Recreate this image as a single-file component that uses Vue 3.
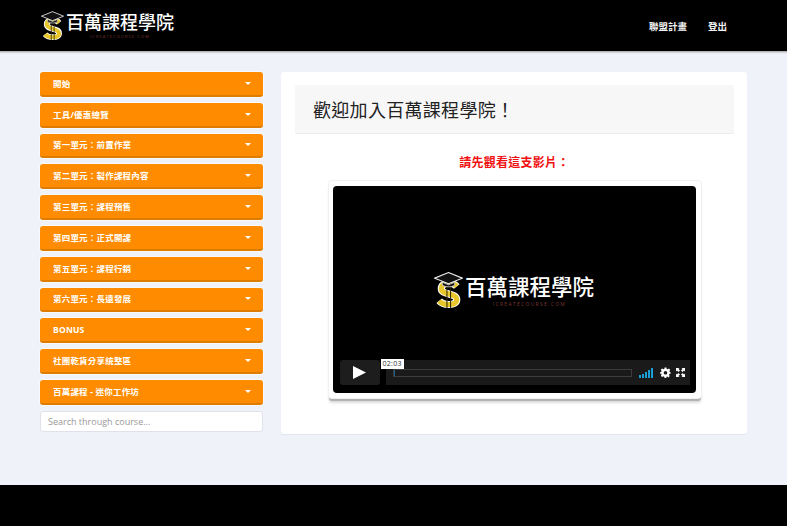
<template>
  <div class="page">
    <header class="topbar">
      <div class="brand">
        <svg class="logo-mark" viewBox="0 0 28 36">
          <path d="M22 14 C18 9 7 10 7 16 C7 23 22 20 22 27 C22 33 9 33 5 28" fill="none" stroke="#fff" stroke-width="7" />
          <path d="M22 14 C18 9 7 10 7 16 C7 23 22 20 22 27 C22 33 9 33 5 28" fill="none" stroke="#e6c62b" stroke-width="5" />
          <path d="M12.500 10 V35 M16 10 V35" stroke="#2c2500" stroke-width="1" />
          <path d="M14 0.500 L27.500 6 L14 11.500 L0.500 6 Z" fill="#111" stroke="#f0f0f0" stroke-width="1" />
          <path d="M8 10 L14 12.500 L20 10 V13 Q14 16 8 13 Z" fill="#111" stroke="#e8e8e8" stroke-width=".7" />
        </svg>
        <div class="brand-text">
          <span class="brand-name">百萬課程學院</span>
          <span class="brand-sub">ICREATECOURSE.COM</span>
        </div>
      </div>
      <nav class="nav">
        <a>聯盟計畫</a>
        <a>登出</a>
      </nav>
    </header>

    <div class="content">
      <aside class="sidebar">
        <button v-for="item in sections" :key="item" class="section">
          <span>{{ item }}</span>
          <i class="caret"></i>
        </button>
        <input class="search" placeholder="Search through course..." />
      </aside>

      <main class="card">
        <div class="title-box">
          <h1>歡迎加入百萬課程學院！</h1>
        </div>
        <p class="notice">請先觀看這支影片：</p>
        <div class="video-frame">
          <div class="video">
            <div class="video-logo">
              <svg class="video-mark" viewBox="0 0 28 36">
                <path d="M22 14 C18 9 7 10 7 16 C7 23 22 20 22 27 C22 33 9 33 5 28" fill="none" stroke="#fff" stroke-width="7" />
                <path d="M22 14 C18 9 7 10 7 16 C7 23 22 20 22 27 C22 33 9 33 5 28" fill="none" stroke="#e6c62b" stroke-width="5" />
                <path d="M12.500 10 V35 M16 10 V35" stroke="#2c2500" stroke-width="1" />
                <path d="M14 0.500 L27.500 6 L14 11.500 L0.500 6 Z" fill="#111" stroke="#f0f0f0" stroke-width="1" />
                <path d="M8 10 L14 12.500 L20 10 V13 Q14 16 8 13 Z" fill="#111" stroke="#e8e8e8" stroke-width=".7" />
              </svg>
              <div class="video-brand">
                <span class="video-name">百萬課程學院</span>
                <span class="video-sub">ICREATECOURSE.COM</span>
              </div>
            </div>
            <div class="controls">
              <button class="play">
                <svg width="13" height="13" viewBox="0 0 13 13"><path d="M0 0 L13 6.500 L0 13 Z" fill="#fff" /></svg>
              </button>
              <div class="bar">
                <span class="time">02:03</span>
                <div class="track"><i class="head"></i></div>
                <svg class="volume" width="15" height="10" viewBox="0 0 15 10">
                  <rect x="0" y="7" width="2" height="3" fill="#1a9fd8" />
                  <rect x="3" y="6" width="2" height="4" fill="#1a9fd8" />
                  <rect x="6" y="4" width="2" height="6" fill="#1a9fd8" />
                  <rect x="9" y="2" width="2" height="8" fill="#1a9fd8" />
                  <rect x="12" y="0" width="2" height="10" fill="#1a9fd8" />
                </svg>
                <svg class="gear" width="11" height="11" viewBox="0 0 24 24">
                  <path fill="#fff" fill-rule="evenodd" d="M10 1h4l.6 3.200 2.200.9L19.500 3.300l2.800 2.800-1.800 2.700.9 2.200L23 11.500v3l-2.600.5-.9 2.200 1.800 2.700-2.800 2.800-2.700-1.800-2.200.9L14 24h-4l-.6-2.900-2.200-.9-2.700 1.800-2.800-2.800 1.800-2.700-.9-2.200L0 14.500v-3l2.600-.5.9-2.200L1.700 6.100l2.800-2.800 2.700 1.800 2.200-.9zM12 8.500a4 4 0 1 0 0 8 4 4 0 0 0 0-8z" />
                </svg>
                <svg class="full" width="9" height="9" viewBox="0 0 9 9">
                  <path fill="#fff" d="M0 0h3.500L2.500 1 4 2.500 2.500 4 1 2.500 0 3.500zM9 0v3.500L8 2.500 6.500 4 5 2.500 6.500 1 5.500 0zM0 9V5.500L1 6.500 2.500 5 4 6.500 2.500 8 3.500 9zM9 9H5.500L6.500 8 5 6.500 6.500 5 8 6.500 9 5.500z" />
                </svg>
              </div>
            </div>
          </div>
        </div>
      </main>
    </div>

    <footer class="footer"></footer>
  </div>
</template>

<script setup>
const sections = [
  '開始',
  '工具/優惠總覽',
  '第一單元：前置作業',
  '第二單元：製作課程內容',
  '第三單元：課程預售',
  '第四單元：正式開課',
  '第五單元：課程行銷',
  '第六單元：長遠發展',
  'BONUS',
  '社團乾貨分享統整區',
  '百萬課程 - 迷你工作坊'
]
</script>

<style>
html,
body {
  margin: 0;
  background: #eff2f8;
}
</style>

<style scoped>
.page {
  height: 526px;
  display: flex;
  flex-direction: column;
  overflow: hidden;
  font-family: 'Open Sans', 'Noto Sans CJK TC', sans-serif;
}

.topbar {
  flex: none;
  height: 52px;
  box-sizing: border-box;
  background: #000;
  border-bottom: 1px solid #b5b5b5;
  box-shadow: 0 1px 1px rgba(0, 0, 0, 0.12);
  display: flex;
  align-items: center;
  justify-content: space-between;
  padding: 0 60px 0 41px;
}

.brand {
  display: flex;
  align-items: flex-start;
  gap: 2px;
  padding-top: 1px;
}

.logo-mark {
  width: 23px;
  height: 30px;
}

.brand-text {
  display: flex;
  flex-direction: column;
  align-items: center;
  padding-top: 1px;
}

.brand-name {
  font-size: 18px;
  line-height: 21px;
  font-weight: 500;
  color: #fff;
}

.brand-sub {
  margin-top: 1px;
  font-size: 4px;
  line-height: 5px;
  color: #7a3434;
  letter-spacing: 1.100px;
}

.nav {
  display: flex;
  gap: 21px;
  font-size: 9.500px;
  font-weight: 600;
  color: #f2f2f2;
}

.content {
  flex: 1;
  display: grid;
  grid-template-columns: 223px 466px;
  gap: 18px;
  align-items: start;
  padding: 20px 0 0 40px;
}

.sidebar {
  display: flex;
  flex-direction: column;
  gap: 6px;
}

.section {
  height: 24.800px;
  border: none;
  border-bottom: 2px solid #de7c00;
  border-radius: 3px;
  background: #ff8c00;
  box-shadow: 0 0 0 1px rgba(255, 255, 255, 0.5);
  color: #fff;
  font-family: inherit;
  font-size: 8.500px;
  font-weight: 700;
  letter-spacing: 0.2px;
  display: flex;
  align-items: center;
  justify-content: space-between;
  padding: 0 12px 1px 13px;
}

.caret {
  width: 0;
  height: 0;
  margin-top: 1px;
  border-left: 3px solid transparent;
  border-right: 3px solid transparent;
  border-top: 3px solid #fff;
}

.search {
  box-sizing: border-box;
  height: 21px;
  padding: 0 7px;
  border: 1px solid #dfe2e8;
  border-radius: 3px;
  background: #fff;
  font-family: inherit;
  font-size: 9px;
  outline: none;
}

.search::placeholder {
  color: #999;
}

.card {
  height: 362px;
  box-sizing: border-box;
  background: #fff;
  border-radius: 3px;
  box-shadow: 0 1px 1px rgba(0, 0, 0, 0.06);
  padding: 13px 13px 0 14px;
}

.title-box {
  height: 49px;
  box-sizing: border-box;
  background: #f7f7f7;
  border-bottom: 1px solid #ececec;
  border-radius: 2px;
  display: flex;
  align-items: center;
  padding-left: 18px;
}

h1 {
  margin: 0;
  font-size: 18px;
  font-weight: 400;
  color: #222;
  letter-spacing: 0.3px;
}

.notice {
  margin: 21px 0 0;
  text-align: center;
  font-size: 12px;
  line-height: 15px;
  font-weight: 700;
  color: #f01010;
  letter-spacing: 0.250px;
}

.video-frame {
  width: 374px;
  height: 219px;
  box-sizing: border-box;
  margin: 10px auto 0;
  padding: 5px 5px 5px 4px;
  background: #fff;
  border: 1px solid #f1f1f1;
  border-radius: 4px;
  box-shadow: 0 3px 1px -1px #b0b0b0, 0 5px 3px -1px #ddd;
}

.video {
  position: relative;
  height: 207px;
  background: #000;
  border-radius: 4px;
  display: flex;
  align-items: center;
  justify-content: center;
}

.video-logo {
  display: flex;
  align-items: flex-start;
  gap: 2px;
  margin-top: 2px;
}

.video-mark {
  width: 29px;
  height: 37px;
}

.video-brand {
  display: flex;
  flex-direction: column;
  align-items: center;
  padding-top: 3px;
}

.video-name {
  font-size: 21.500px;
  line-height: 24px;
  color: #fff;
  font-weight: 500;
}

.video-sub {
  margin-top: 2px;
  font-size: 5px;
  line-height: 6px;
  color: #7a3434;
  letter-spacing: 1.300px;
}

.controls {
  position: absolute;
  left: 7px;
  right: 6px;
  bottom: 8px;
  height: 25px;
  display: flex;
  gap: 6px;
}

.play {
  width: 40px;
  border: none;
  border-radius: 3px;
  background: #1d1d1d;
  display: flex;
  align-items: center;
  justify-content: center;
  padding: 0;
}

.bar {
  position: relative;
  flex: 1;
  background: #1a1a1a;
  display: flex;
  align-items: center;
  padding: 0 5px 0 7px;
}

.track {
  position: relative;
  flex: 1;
  height: 6px;
  border: 1px solid #3d3d3d;
}

.head {
  position: absolute;
  left: 0;
  top: 0;
  width: 1px;
  height: 6px;
  background: #1c5f8a;
}

.time {
  position: absolute;
  left: -5px;
  top: -1px;
  background: #fff;
  color: #333;
  font-size: 7px;
  line-height: 10px;
  padding: 0 2px;
  letter-spacing: 0.300px;
}

.volume {
  margin-left: 7px;
}

.gear {
  margin-left: 6px;
}

.full {
  margin-left: 5px;
}

.footer {
  flex: none;
  height: 41px;
  background: #000;
}
</style>
